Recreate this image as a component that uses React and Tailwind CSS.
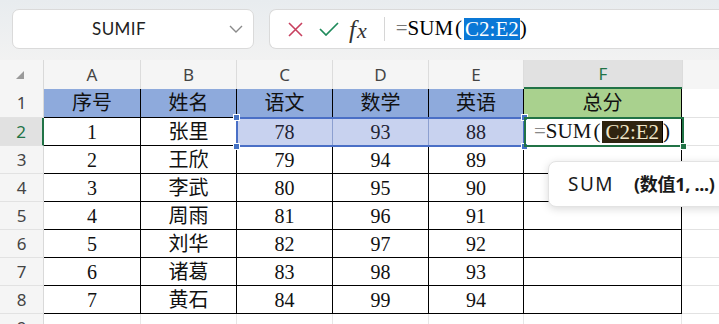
import React from "react";

const rows = [
  [1, "张里", 78, 93, 88],
  [2, "王欣", 79, 94, 89],
  [3, "李武", 80, 95, 90],
  [4, "周雨", 81, 96, 91],
  [5, "刘华", 82, 97, 92],
  [6, "诸葛", 83, 98, 93],
  [7, "黄石", 84, 99, 94],
];

const serif = "font-['Liberation_Serif','Noto_Sans_CJK_SC',serif]";
const sans = "font-['Noto_Sans','Noto_Sans_CJK_SC',sans-serif]";

// one row number cell on the left
const RowHead = ({ n, active }) => (
  <div
    className={`flex items-center justify-center text-[17px] border-b border-[#e2e2e2] ${sans} ${
      active
        ? "bg-[#e1e1e1] text-[#217346] border-r-2 border-r-[#217346]"
        : "bg-[#f5f5f5] text-[#444] border-r border-r-[#d9d9d9]"
    }`}
  >
    {n}
  </div>
);

const Cell = ({ children, className = "" }) => (
  <div
    className={`flex items-center justify-center text-[20px] text-[#111] border-r border-b border-black ${serif} ${className}`}
  >
    {children}
  </div>
);

const Blank = () => <div className="border-b border-[#e2e2e2] bg-white" />;

const Handle = ({ className }) => (
  <div className={`absolute w-[7px] h-[7px] bg-[#4472c4] border border-white ${className}`} />
);

export default function App() {
  return (
    <div className="w-[719px] h-[324px] overflow-hidden bg-[#f2f2f2]">
      {/* name box + formula bar */}
      <div className="h-[60px] flex items-start pt-[9px] pl-[12px] gap-[15px] bg-gradient-to-b from-[#e8ecef] to-[#f2f2f2]">
        <div className="w-[242px] h-[40px] bg-white rounded-[7px] border border-[#dadada] flex items-center">
          <span className="flex-1 text-center pl-[4px] text-[17px] text-[#222] tracking-[0.4px] font-['Lato',sans-serif]">
            SUMIF
          </span>
          <svg width="14" height="8" viewBox="0 0 14 8" className="mr-[10px] ml-[8px]">
            <polyline points="1,1 7,7 13,1" fill="none" stroke="#8a8a8a" strokeWidth="1.4" />
          </svg>
        </div>
        <div className="flex-1 h-[40px] bg-white rounded-l-[7px] border border-r-0 border-[#dadada] flex items-center pl-[18px]">
          <svg width="15" height="15" viewBox="0 0 15 15">
            <path d="M1 1 L14 14 M14 1 L1 14" stroke="#c8405f" strokeWidth="1.6" />
          </svg>
          <svg width="20" height="14" viewBox="0 0 20 14" className="ml-[16px]">
            <polyline points="1,7 7,13 19,1" fill="none" stroke="#1f8a5b" strokeWidth="1.7" />
          </svg>
          <span className={`ml-[10px] text-[25px] leading-none italic text-[#333] ${serif}`}>
            f<span className="text-[22px] ml-[1px]">x</span>
          </span>
          <div className="ml-[17px] w-px h-[24px] bg-[#d6d6d6]" />
          <div className={`ml-[11px] text-[21px] text-black flex items-center ${serif}`}>
            <span className="text-[#777]">=</span>
            <span>SUM</span>
            <span className="mx-[2px]">(</span>
            <span className="bg-[#0a78d6] text-white px-[1px] leading-[22px]">C2:E2</span>
            <span>)</span>
          </div>
        </div>
      </div>

      {/* sheet */}
      <div className="relative">
        <div className="grid grid-cols-[44px_97px_96px_96px_96px_95px_158px_1fr] grid-rows-[29px_29px_repeat(8,28px)]">
          {/* column headers */}
          <div className="bg-[#f5f5f5] border-r border-[#d9d9d9] flex items-center justify-center">
            <svg width="8" height="8" viewBox="0 0 8 8" className="mt-[1px] -ml-[3px]">
              <polygon points="8,0 8,8 0,8" fill="#9a9a9a" />
            </svg>
          </div>
          {["A", "B", "C", "D", "E"].map((c) => (
            <div
              key={c}
              className={`bg-[#f5f5f5] border-r border-[#dcdcdc] flex items-center justify-center text-[17px] text-[#444] ${sans}`}
            >
              {c}
            </div>
          ))}
          <div className={`bg-[#e1e1e1] border-b-2 border-[#217346] flex items-center justify-center text-[17px] text-[#217346] ${sans}`}>
            F
          </div>
          <div className="bg-[#f5f5f5] border-l border-[#dcdcdc]" />

          {/* row 1 */}
          <RowHead n={1} />
          {["序号", "姓名", "语文", "数学", "英语"].map((t) => (
            <Cell key={t} className="bg-[#8eaadc]">
              {t}
            </Cell>
          ))}
          <Cell className="bg-[#a9d18e]">总分</Cell>
          <Blank />

          {/* data rows */}
          {rows.map((r, i) => (
            <React.Fragment key={r[0]}>
              <RowHead n={i + 2} active={i === 0} />
              <Cell className="bg-white">{r[0]}</Cell>
              <Cell className="bg-white">{r[1]}</Cell>
              {r.slice(2).map((v, j) => (
                <Cell
                  key={j}
                  className={i === 0 ? "bg-[#c8d2ef] border-r-[#8c9fd0] text-[#223]" : "bg-white"}
                >
                  {v}
                </Cell>
              ))}
              {i === 0 ? (
                <Cell className="bg-white justify-start pl-[10px] text-[21px]">
                  <span className="text-[#888]">=</span>
                  <span>SUM</span>
                  <span className="mx-[2px]">(</span>
                  <span className="bg-[#2f2410] text-[#f1e6c8] px-[3px] leading-[22px]">C2:E2</span>
                  <span className="w-px h-[22px] bg-black" />
                  <span>)</span>
                </Cell>
              ) : (
                <Cell className="bg-white" />
              )}
              <Blank />
            </React.Fragment>
          ))}

          {/* row 9 */}
          <RowHead n={9} />
          {[0, 1, 2, 3, 4, 5].map((k) => (
            <div key={k} className="bg-white border-r border-[#e6e6e6]" />
          ))}
          <div className="bg-white" />
        </div>

        {/* range C2:E2 */}
        <div className="absolute left-[236px] top-[57px] w-[289px] h-[30px] border-2 border-[#4a6fc6] pointer-events-none">
          <Handle className="-left-[5px] -top-[5px]" />
          <Handle className="-left-[5px] -bottom-[5px]" />
          <Handle className="-right-[5px] -top-[5px]" />
          <Handle className="-right-[5px] -bottom-[5px]" />
        </div>

        {/* active cell F2 */}
        <div className="absolute left-[524px] top-[57px] w-[160px] h-[30px] border-2 border-[#217346] pointer-events-none">
          <div className="absolute -right-[5px] -bottom-[5px] w-[7px] h-[7px] bg-[#217346] border border-white" />
        </div>

        {/* function tooltip */}
        <div className={`absolute left-[548px] top-[101px] w-[200px] h-[46px] bg-white rounded-[8px] border border-[#e3e3e3] shadow-[0_2px_8px_rgba(0,0,0,0.15)] flex items-center pl-[19px] text-[19px] text-[#1a1a1a] whitespace-nowrap ${sans}`}>
          <span className="tracking-[1.5px]">SUM</span>
          <span className="ml-[20px] font-bold text-[18px] tracking-[-0.3px]">(数值1, ...)</span>
        </div>
      </div>
    </div>
  );
}
